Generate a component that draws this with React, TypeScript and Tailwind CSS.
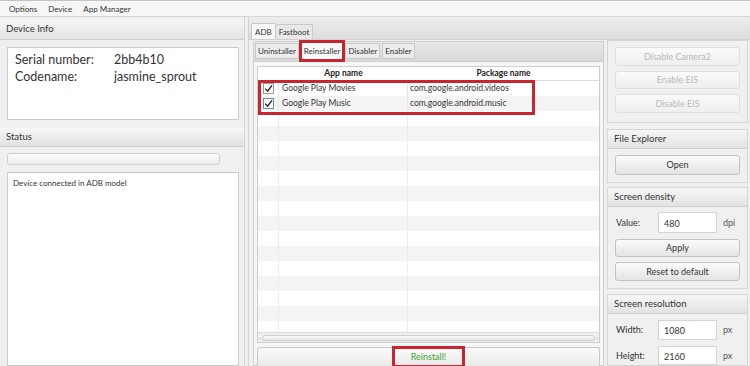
import React from "react";

const apps = [
    { name: "Google Play Movies", pkg: "com.google.android.videos", focus: false },
    { name: "Google Play Music", pkg: "com.google.android.music", focus: true },
];

const emptyRows = Array.from({ length: 15 });

const Header = ({ title }: { title: string }) => (
    <div className="h-[19px] flex items-center px-[6px] bg-linear-to-b from-[#f7f7f7] to-[#e2e2e2] border-b border-[#d0d0d0] text-[9.5px] text-[#333]">
        {title}
    </div>
);

const Btn = ({ label, disabled, h = "h-[19px]" }: { label: string; disabled?: boolean; h?: string }) => (
    <div
        className={`${h} flex items-center justify-center rounded-[3px] border text-[9px] ${
            disabled
                ? "border-[#dedede] bg-linear-to-b from-[#fafafa] to-[#efefef] text-[#b9b9b9]"
                : "border-[#c2c2c2] bg-linear-to-b from-[#fbfbfb] to-[#e4e4e4] text-[#333]"
        }`}
    >
        {label}
    </div>
);

const Field = ({ label, value, unit, h }: { label: string; value: string; unit: string; h: string }) => (
    <div className="flex items-center pl-[8px] text-[9px] text-[#333]">
        <span className="w-[42px]">{label}</span>
        <div className={`${h} w-[59px] bg-white border border-[#d4d4d4] flex items-center pl-[5px] pt-[2px]`}>{value}</div>
        <span className="ml-[6px] text-[#555]">{unit}</span>
    </div>
);

const Check = ({ focus }: { focus: boolean }) => (
    <div
        className={`w-[11px] h-[11px] bg-white border flex items-center justify-center ${
            focus ? "border-[#6b8bb0]" : "border-[#9a9a9a]"
        }`}
    >
        <svg width="9" height="9" viewBox="0 0 9 9">
            <path d="M1.2 4.6 L3.6 7.2 L8 1.4" fill="none" stroke="#222" strokeWidth="1.4" />
        </svg>
    </div>
);

export default function App() {
    return (
        <div className="w-[750px] h-[366px] overflow-hidden bg-[#f0f0f0] font-['Lato','Open_Sans',sans-serif] flex flex-col">
            {/* menu */}
            <div className="h-[17px] shrink-0 flex items-center gap-[11px] pl-[9px] bg-[#f6f6f6] border-t border-[#c4c4c4] border-b border-b-[#d6d6d6] text-[8px] text-[#333]">
                <span>Options</span>
                <span>Device</span>
                <span>App Manager</span>
            </div>

            <div className="flex flex-1 min-h-0">
                {/* left */}
                <div className="w-[245px] shrink-0 flex flex-col border-r border-[#d4d4d4] pt-[2px]">
                    <div className="h-[21px] flex items-center px-[6px] bg-linear-to-b from-[#f7f7f7] to-[#e2e2e2] border-b border-[#d0d0d0] text-[9.5px] text-[#333]">
                        Device Info
                    </div>
                    <div className="mt-[7px] ml-[7px] mr-[5px] h-[73px] bg-white border border-[#cbcbcb] pl-[7px] pt-[4px] text-[12.5px] text-[#333]">
                        <div className="flex h-[17px] items-center">
                            <span className="w-[99px]">Serial number:</span>
                            <span>2bb4b10</span>
                        </div>
                        <div className="flex h-[17px] items-center">
                            <span className="w-[99px]">Codename:</span>
                            <span>jasmine_sprout</span>
                        </div>
                    </div>
                    <div className="mt-[8px]">
                        <Header title="Status" />
                    </div>
                    <div className="mt-[6px] ml-[7px] w-[213px] h-[12px] rounded-[3px] border border-[#cfcfcf] bg-linear-to-b from-[#fdfdfd] to-[#ededed]" />
                    <div className="mt-[7px] ml-[7px] mr-[5px] flex-1 bg-white border border-[#cbcbcb] px-[5px] pt-[4px] text-[8px] text-[#333]">
                        Device connected in ADB model
                    </div>
                </div>

                {/* tab pane */}
                <div className="flex-1 flex flex-col ml-[3px] border-l border-[#d4d4d4]">
                    <div className="h-[23px] shrink-0 flex items-end pl-[2px] bg-linear-to-b from-[#eeeeee] to-[#dcdcdc] border-b border-[#cfcfcf] text-[8px] text-[#333]">
                        <div className="h-[16px] px-[3px] flex items-center bg-[#f7f7f7] border border-b-0 border-[#c8c8c8] rounded-t-[2px]">ADB</div>
                        <div className="h-[15px] px-[3px] flex items-center bg-[#e8e8e8] border border-b-0 border-l-0 border-[#c8c8c8] rounded-t-[2px]">Fastboot</div>
                    </div>

                    <div className="flex flex-1 min-h-0">
                        {/* middle */}
                        <div className="w-[357px] shrink-0 flex flex-col pl-[4px] pr-[2px] pt-[1px]">
                            <div className="h-[21px] shrink-0 flex items-end gap-[2px] pl-[1px] bg-linear-to-b from-[#e9e9e9] to-[#d9d9d9] border border-[#cfcfcf] text-[8px] text-[#333]">
                                <div className="h-[16px] px-[2px] mb-[2px] flex items-center bg-[#ececec] border border-[#c8c8c8]">Uninstaller</div>
                                <div className="h-[16px] px-[2px] mb-[2px] ml-[1px] flex items-center bg-[#f8f8f8] outline-[3px] outline-[#c9252f]">Reinstaller</div>
                                <div className="h-[16px] px-[2px] mb-[2px] ml-[1px] flex items-center bg-[#ececec] border border-[#c8c8c8]">Disabler</div>
                                <div className="h-[16px] px-[2px] mb-[2px] flex items-center bg-[#ececec] border border-[#c8c8c8]">Enabler</div>
                            </div>

                            <div className="flex-1 min-h-0 flex flex-col bg-[#f6f6f6] border border-t-0 border-[#cfcfcf] px-[3px] pt-[4px]">
                                <div className="relative h-[277px] shrink-0 flex flex-col bg-white border border-[#cdcdcd] overflow-hidden">
                                    <div className="h-[14px] shrink-0 grid grid-cols-[21px_129px_1fr] border-b border-[#dcdcdc] text-[8.5px] font-bold text-[#222]">
                                        <div />
                                        <div className="flex items-center justify-center">App name</div>
                                        <div className="flex items-center justify-center">Package name</div>
                                    </div>
                                    <div className="flex-1 min-h-0 overflow-hidden">
                                        {apps.map((a, i) => (
                                            <div
                                                key={a.name}
                                                className={`h-[15px] grid grid-cols-[21px_129px_1fr] text-[8.5px] text-[#333] ${
                                                    i % 2 ? "bg-[#f4f4f4]" : "bg-white"
                                                }`}
                                            >
                                                <div className="flex items-center justify-center border-r border-[#e8e8e8]">
                                                    <Check focus={a.focus} />
                                                </div>
                                                <div className="flex items-center pl-[3px] border-r border-[#e8e8e8]">{a.name}</div>
                                                <div className="flex items-center pl-[2px]">{a.pkg}</div>
                                            </div>
                                        ))}
                                        {emptyRows.map((_, i) => (
                                            <div
                                                key={i}
                                                className={`h-[15px] grid grid-cols-[21px_129px_1fr] ${
                                                    i % 2 ? "bg-[#f4f4f4]" : "bg-white"
                                                }`}
                                            >
                                                <div className="border-r border-[#ececec]" />
                                                <div className="border-r border-[#ececec]" />
                                                <div />
                                            </div>
                                        ))}
                                    </div>
                                    {/* horizontal scrollbar */}
                                    <div className="h-[10px] shrink-0 flex items-center gap-[1px] px-[1px] bg-[#f0f0f0] border-t border-[#dcdcdc] text-[6px] text-[#999]">
                                        <span>‹</span>
                                        <div className="flex-1 h-[6px] rounded-[3px] bg-linear-to-b from-[#fafafa] to-[#e4e4e4] border border-[#cfcfcf]" />
                                        <span>›</span>
                                    </div>
                                    {/* highlight */}
                                    <div className="absolute left-0 top-[13px] w-[277px] h-[35px] border-[3px] border-[#c9252f]" />
                                </div>
                                <div className="mt-[4px] h-[22px] flex items-start justify-center rounded-t-[3px] border border-b-0 border-[#c8c8c8] bg-linear-to-b from-[#fbfbfb] to-[#e8e8e8]">
                                    <div className="-mt-[2px] w-[73px] h-[22px] flex items-center justify-center border-[3px] border-[#c9252f] text-[9px] text-[#3fa33a]">
                                        Reinstall!
                                    </div>
                                </div>
                            </div>
                        </div>

                        {/* right */}
                        <div className="flex-1 flex flex-col pl-[1px] pr-[2px]">
                            <div className="flex flex-col gap-[5px] border border-[#d6d6d6] px-[7px] pt-[6px] pb-[9px]">
                                <Btn label="Disable Camera2" disabled h="h-[19px]" />
                                <Btn label="Enable EIS" disabled h="h-[18px]" />
                                <Btn label="Disable EIS" disabled h="h-[19px]" />
                            </div>

                            <div className="mt-[6px] border border-[#d6d6d6] pb-[7px]">
                                <Header title="File Explorer" />
                                <div className="mt-[6px] px-[7px]">
                                    <Btn label="Open" h="h-[20px]" />
                                </div>
                            </div>

                            <div className="mt-[4px] border border-[#d6d6d6] pb-[7px]">
                                <Header title="Screen density" />
                                <div className="mt-[5px]">
                                    <Field label="Value:" value="480" unit="dpi" h="h-[21px]" />
                                </div>
                                <div className="mt-[6px] px-[7px] flex flex-col gap-[5px]">
                                    <Btn label="Apply" h="h-[18px]" />
                                    <Btn label="Reset to default" h="h-[19px]" />
                                </div>
                            </div>

                            <div className="mt-[5px] border border-[#d6d6d6] flex-1">
                                <Header title="Screen resolution" />
                                <div className="mt-[6px]">
                                    <Field label="Width:" value="1080" unit="px" h="h-[20px]" />
                                </div>
                                <div className="mt-[6px]">
                                    <Field label="Height:" value="2160" unit="px" h="h-[19px]" />
                                </div>
                            </div>
                        </div>
                    </div>
                </div>
            </div>
        </div>
    );
}
